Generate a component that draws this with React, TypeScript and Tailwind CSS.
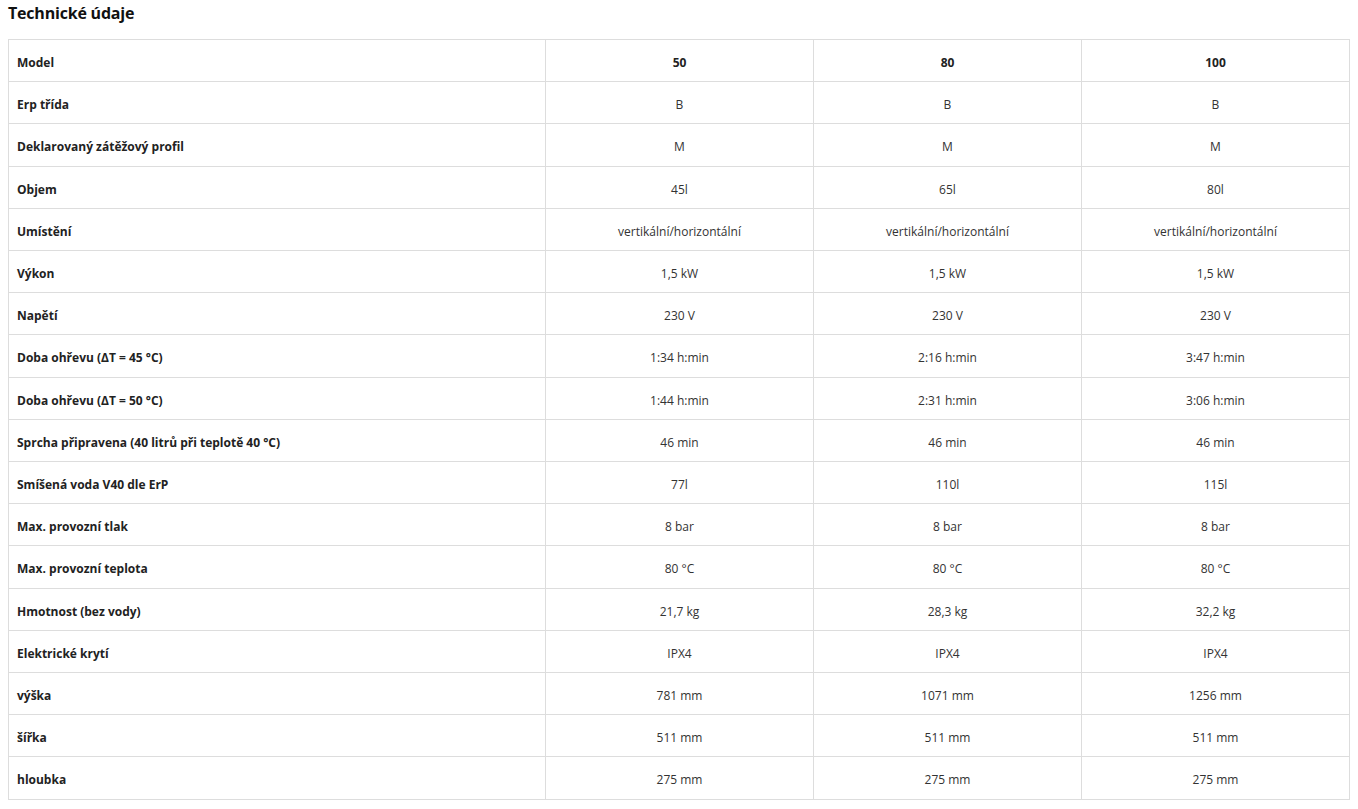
const rows: [string, string, string, string][] = [
  ['Model', '50', '80', '100'],
  ['Erp třída', 'B', 'B', 'B'],
  ['Deklarovaný zátěžový profil', 'M', 'M', 'M'],
  ['Objem', '45l', '65l', '80l'],
  ['Umístění', 'vertikální/horizontální', 'vertikální/horizontální', 'vertikální/horizontální'],
  ['Výkon', '1,5 kW', '1,5 kW', '1,5 kW'],
  ['Napětí', '230 V', '230 V', '230 V'],
  ['Doba ohřevu (ΔT = 45 °C)', '1:34 h:min', '2:16 h:min', '3:47 h:min'],
  ['Doba ohřevu (ΔT = 50 °C)', '1:44 h:min', '2:31 h:min', '3:06 h:min'],
  ['Sprcha připravena (40 litrů při teplotě 40 °C)', '46 min', '46 min', '46 min'],
  ['Smíšená voda V40 dle ErP', '77l', '110l', '115l'],
  ['Max. provozní tlak', '8 bar', '8 bar', '8 bar'],
  ['Max. provozní teplota', '80 °C', '80 °C', '80 °C'],
  ['Hmotnost (bez vody)', '21,7 kg', '28,3 kg', '32,2 kg'],
  ['Elektrické krytí', 'IPX4', 'IPX4', 'IPX4'],
  ['výška', '781 mm', '1071 mm', '1256 mm'],
  ['šířka', '511 mm', '511 mm', '511 mm'],
  ['hloubka', '275 mm', '275 mm', '275 mm'],
]

export default function App() {
  return (
    <div className="min-h-screen bg-white px-2 font-['Open_Sans',sans-serif] text-[#222]">
      <h2 className="text-[16px] leading-[26px] font-bold tracking-[-0.2px] text-[#111]">Technické údaje</h2>
      <table className="mt-[13px] w-[1341px] table-fixed border-collapse text-[12px] leading-[17.2px]">
        <colgroup>
          <col className="w-[537px]" />
          <col className="w-[268px]" />
          <col className="w-[268px]" />
          <col className="w-[268px]" />
        </colgroup>
        <tbody>
          {rows.map((r, i) => (
            <tr key={i}>
              <td className="border border-[#ddd] px-2 pt-[14px] pb-[10px] font-bold">{r[0]}</td>
              {r.slice(1).map((v, j) => (
                <td
                  key={j}
                  className={
                    'border border-[#ddd] px-2 pt-[14px] pb-[10px] text-center ' +
                    (i === 0 ? 'font-bold' : 'text-[#333]')
                  }
                >
                  {v}
                </td>
              ))}
            </tr>
          ))}
        </tbody>
      </table>
    </div>
  )
}
